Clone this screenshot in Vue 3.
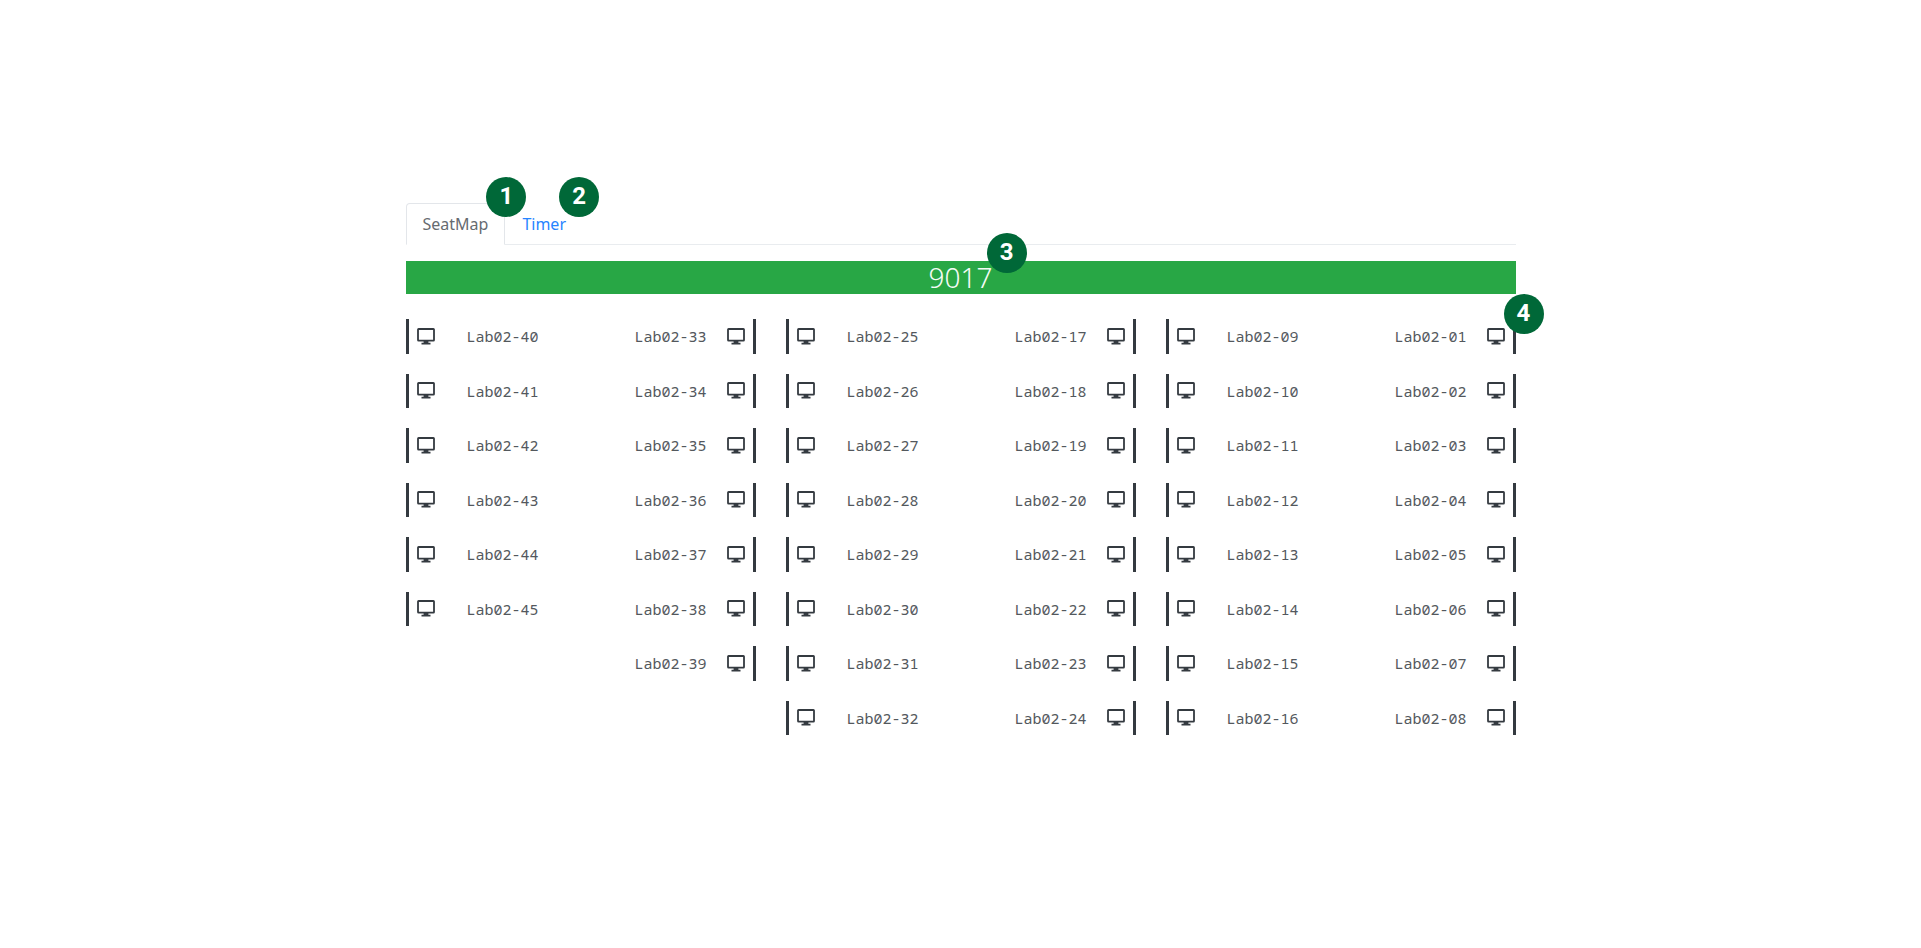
<script setup>
const range = (from, to) =>
  Array.from({ length: to - from + 1 }, (_, i) => `Lab02-${String(from + i).padStart(2, '0')}`)

const groups = [
  { left: range(40, 45), right: range(33, 39) },
  { left: range(25, 32), right: range(17, 24) },
  { left: range(9, 16), right: range(1, 8) },
]
</script>

<template>
  <main class="container">
    <nav class="tabs" aria-label="Room views">
      <a class="tab active" href="#seatmap" aria-current="page">SeatMap<span class="badge badge-seatmap">1</span></a>
      <a class="tab" href="#timer">Timer<span class="badge badge-timer">2</span></a>
    </nav>

    <h1 class="room">
      <span class="room-number">9017<span class="badge badge-room">3</span></span>
    </h1>

    <section class="groups">
      <div v-for="(group, g) in groups" :key="g" class="group">
        <ul v-for="side in ['left', 'right']" :key="side" class="column">
          <li v-for="seat in group[side]" :key="seat" class="seat" :class="side">
            <svg class="monitor" viewBox="0 0 18 17" aria-hidden="true">
              <rect x="1" y="1" width="16" height="11.6" rx="0.6" fill="none" stroke="currentColor" stroke-width="1.8" />
              <path d="M6.6 13h4.8v1.8h2.1v1.6h-9v-1.6h2.1z" fill="currentColor" />
            </svg>
            <span class="label">{{ seat }}</span>
            <span v-if="seat === 'Lab02-01'" class="badge badge-seat">4</span>
          </li>
        </ul>
      </div>
    </section>
  </main>
</template>

<style>
body {
  background: #fff;
}
</style>

<style scoped>
.container {
  box-sizing: border-box;
  max-width: 1140px;
  margin: 0 auto;
  padding: 203px 15px 48px;
  font-family: "Noto Sans", "Open Sans", sans-serif;
  color: #495057;
}

.tabs {
  display: flex;
  border-bottom: 1px solid #e9ecef;
}

.tab {
  position: relative;
  margin-bottom: -1px;
  padding: 8px 16px;
  border: 1px solid transparent;
  border-radius: 4px 4px 0 0;
  font-size: 16px;
  line-height: 24px;
  color: #2684ff;
  text-decoration: none;
}

.tab.active {
  border-color: #e3e6ea #e3e6ea #fff;
  background: #fff;
  color: #666b70;
}

.room {
  margin: 16px 0 25px;
  background: #28a745;
  color: #f4fbf5;
  font-size: 28px;
  font-weight: 300;
  line-height: 33px;
  text-align: center;
}

.room-number {
  position: relative;
}

.groups {
  display: grid;
  grid-template-columns: repeat(3, 1fr);
  gap: 30px;
}

.group {
  display: grid;
  grid-template-columns: 1fr 1fr;
}

.column {
  display: flex;
  flex-direction: column;
  gap: 20px;
  margin: 0;
  padding: 0;
  list-style: none;
  font-size: 23px;
  line-height: 1.5;
}

.seat {
  position: relative;
  display: flex;
  align-items: center;
  height: 1.5em;
  border: 0 solid #343a40;
}

.seat.left {
  gap: 32px;
  padding-left: 8px;
  border-left-width: 3px;
}

.seat.right {
  flex-direction: row-reverse;
  gap: 20px;
  padding-right: 8px;
  border-right-width: 3px;
}

.monitor {
  flex: none;
  width: 18px;
  height: 17px;
  color: #343a40;
}

.label {
  font-family: "Noto Sans Mono", "DejaVu Sans Mono", monospace;
  font-size: 15px;
  line-height: 24px;
  color: #53585d;
}

.badge {
  position: absolute;
  z-index: 1;
  width: 40px;
  height: 40px;
  border-radius: 50%;
  background: #006838;
  color: #fff;
  font-family: Roboto, sans-serif;
  font-size: 24px;
  font-weight: 700;
  line-height: 38px;
  text-align: center;
}

.badge-seatmap {
  top: -27px;
  right: -22px;
}

.badge-timer {
  top: -27px;
  right: -17px;
}

.badge-room {
  top: -25px;
  left: 58px;
}

.badge-seat {
  top: -25px;
  right: -31px;
}
</style>
